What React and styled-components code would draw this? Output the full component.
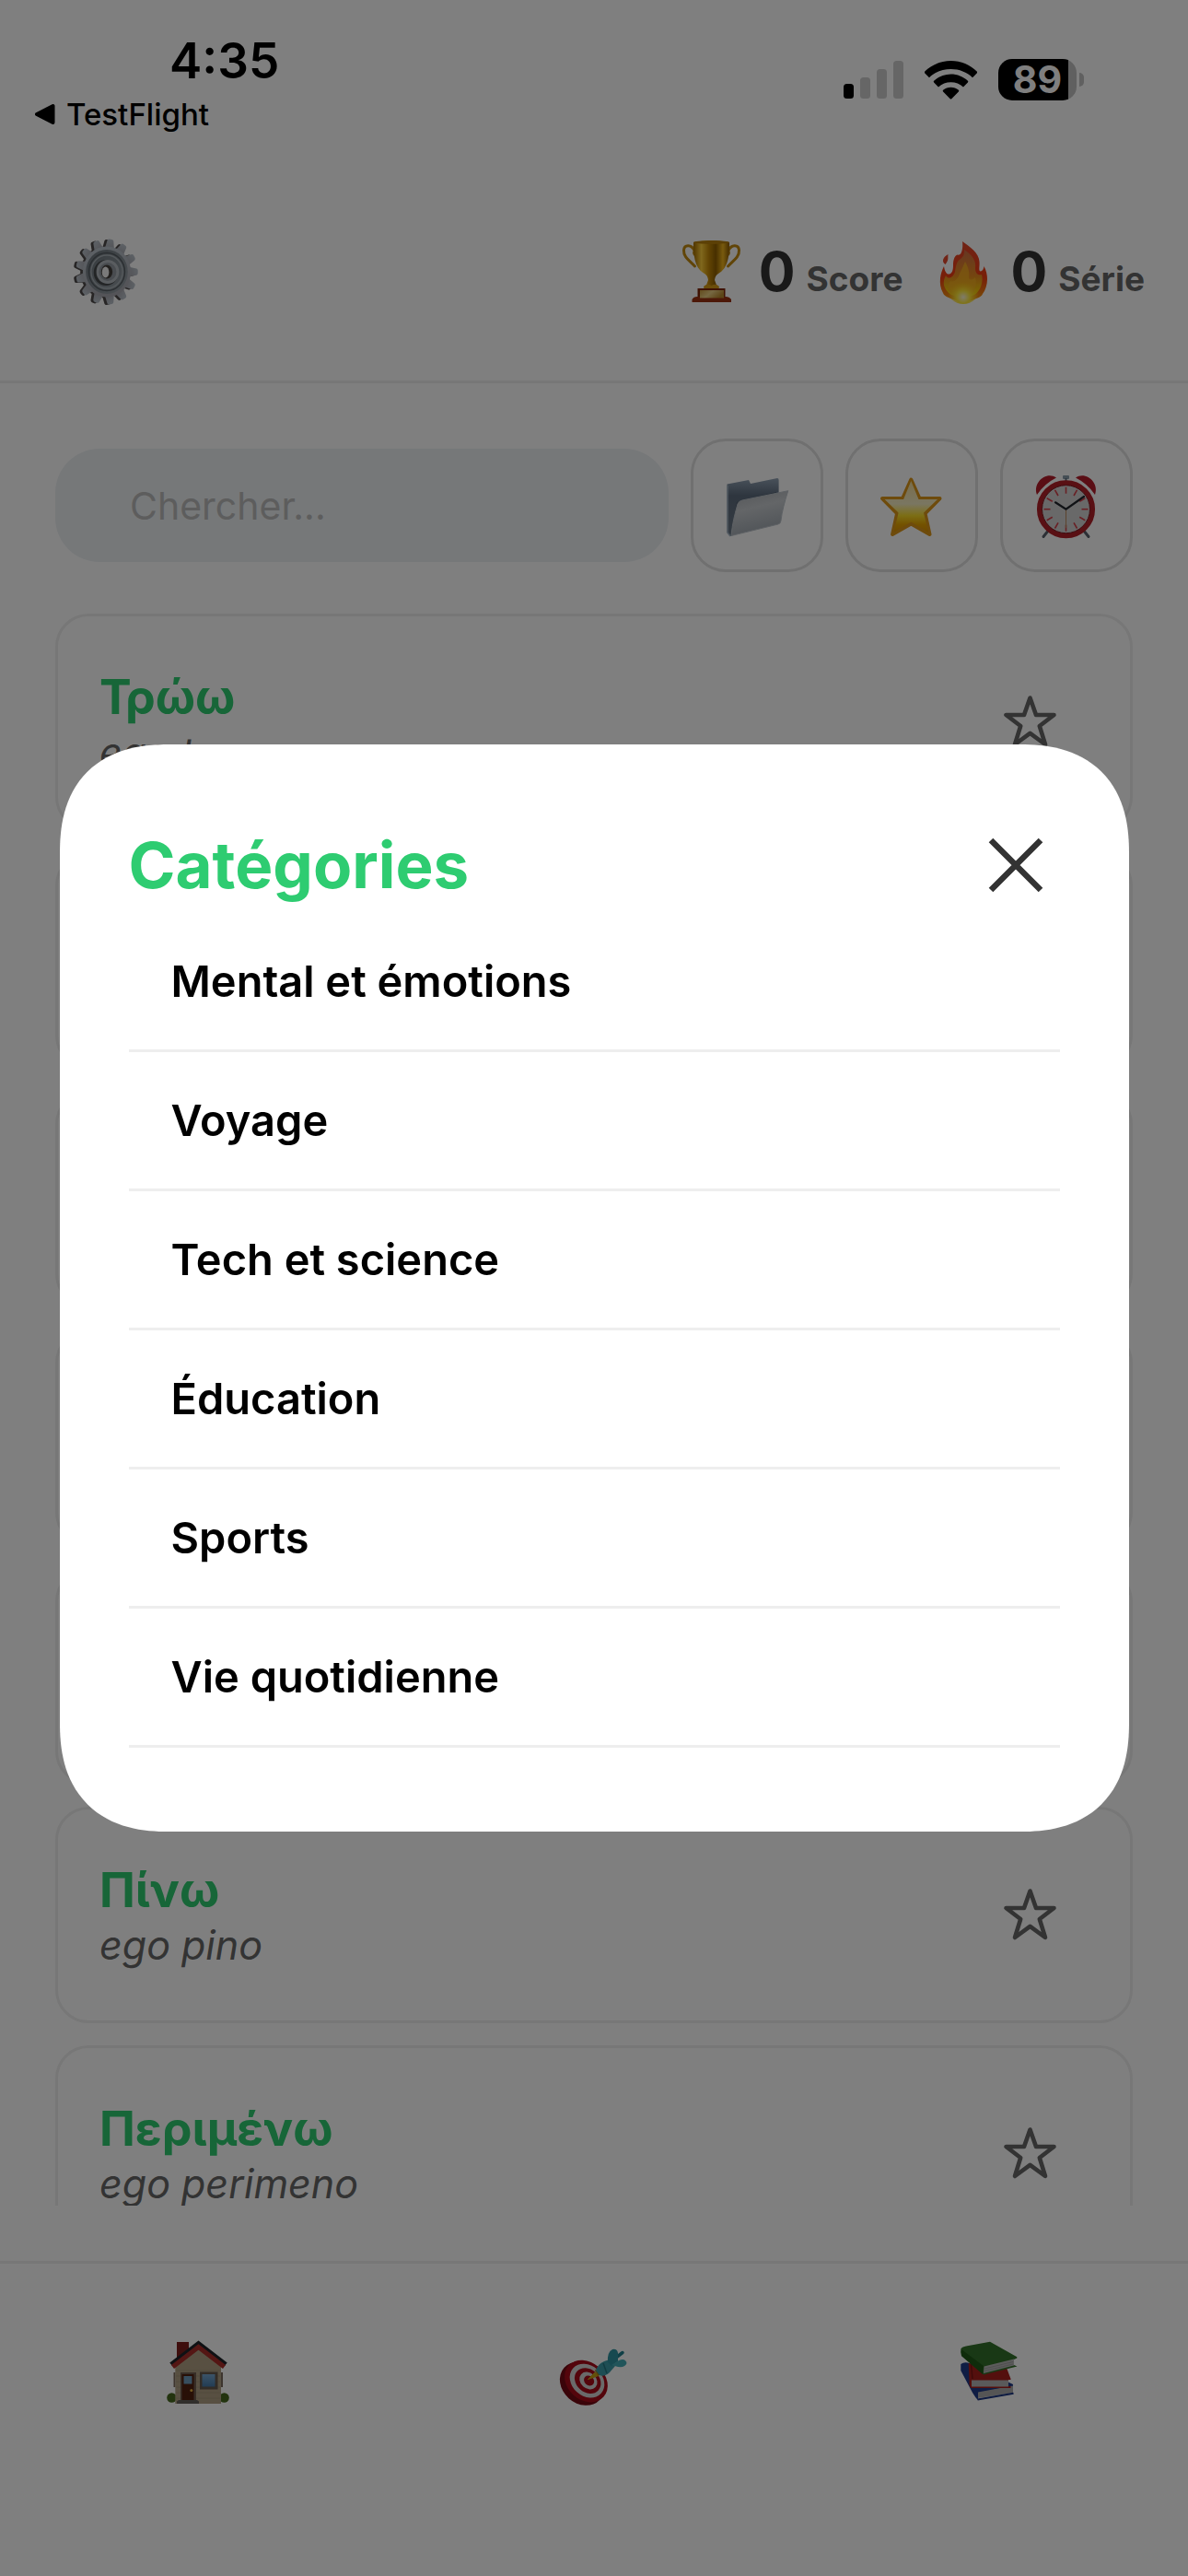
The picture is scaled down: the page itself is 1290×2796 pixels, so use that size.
import React from "react";
import styled, { createGlobalStyle, css } from "styled-components";

const GlobalStyle = createGlobalStyle`
  *, *::before, *::after { box-sizing: border-box; }
  body {
    margin: 0;
    background: #fff;
    color: #000;
    font-family: Inter, "Liberation Sans", sans-serif;
  }
  button, input { font: inherit; color: inherit; }
  h2, p, ul { margin: 0; padding: 0; }
  ul { list-style: none; }
`;

const resetButton = css`
  margin: 0;
  padding: 0;
  border: 0;
  background: none;
  cursor: pointer;
`;

/* ---------- layout ---------- */

const Screen = styled.div`
  display: flex;
  flex-direction: column;
  height: 100vh;
  background: #fff;
`;

const StatusBar = styled.div`
  display: flex;
  justify-content: space-between;
  align-items: flex-start;
  flex: none;
  height: 177px;
  padding: 36px 113px 0 38px;
`;

const StatusLeft = styled.div`
  display: flex;
  flex-direction: column;
  gap: 8px;
`;

const Time = styled.time`
  padding-left: 146px;
  font-size: 53px;
  font-weight: 600;
  line-height: 60px;
`;

const BackLink = styled.a`
  display: flex;
  align-items: center;
  gap: 12px;
  color: #000;
  font-size: 33px;
  font-weight: 500;
  line-height: 40px;
  text-decoration: none;
`;

const StatusRight = styled.div`
  display: flex;
  align-items: center;
  gap: 23px;
  padding-top: 28px;
`;

const Battery = styled.div`
  display: flex;
  align-items: center;
  gap: 3px;
`;

const BatteryBody = styled.div`
  display: flex;
  align-items: center;
  justify-content: center;
  width: 85px;
  height: 45px;
  border-radius: 15px;
  background: linear-gradient(90deg, #000 76px, #c0c0c0 76px);
  color: #fff;
  font-size: 41px;
  font-weight: 700;
  line-height: 45px;
`;

const BatteryTip = styled.div`
  width: 5px;
  height: 15px;
  border-radius: 0 8px 8px 0;
  background: #c0c0c0;
`;

const Header = styled.header`
  display: flex;
  align-items: center;
  justify-content: space-between;
  flex: none;
  height: 239px;
  padding: 0 47px 0 78px;
  border-bottom: 3px solid #eee;
`;

const IconButton = styled.button`
  ${resetButton}
  display: flex;
`;

const Stats = styled.div`
  display: flex;
  gap: 30px;
`;

const Stat = styled.div`
  display: flex;
  align-items: center;
  gap: 15px;
`;

const StatText = styled.div`
  display: flex;
  align-items: baseline;
  gap: 12px;
`;

const StatValue = styled.span`
  color: #333;
  font-size: 59px;
  font-weight: 700;
  line-height: 72px;
`;

const StatLabel = styled.span`
  color: #666;
  font-size: 37px;
  font-weight: 700;
`;

const Toolbar = styled.div`
  display: flex;
  align-items: center;
  gap: 24px;
  flex: none;
  padding: 60px 60px 45px;
`;

const SearchInput = styled.input`
  flex: 1;
  min-width: 0;
  height: 123px;
  padding: 0 81px;
  border: 0;
  border-radius: 48px;
  outline: none;
  background: #ecf0f3;
  font-size: 41px;
  &::placeholder { color: #bbb; opacity: 1; }
`;

const FilterButton = styled.button`
  ${resetButton}
  display: flex;
  align-items: center;
  justify-content: center;
  width: 144px;
  height: 145px;
  border: 3px solid #e0e0e0;
  border-radius: 38px;
`;

const WordList = styled.ul`
  display: flex;
  flex-direction: column;
  gap: 24px;
  flex: 1;
  min-height: 0;
  margin-bottom: 60px;
  padding: 0 60px;
  overflow: hidden;
`;

const Card = styled.li`
  display: flex;
  align-items: center;
  justify-content: space-between;
  flex: none;
  min-height: 235px;
  padding: 0 79px 0 45px;
  border: 3px solid #eee;
  border-radius: 36px;
`;

const Word = styled.p`
  color: #2ecc71;
  font-size: 52px;
  font-weight: 700;
  line-height: 64px;
`;

const Phonetic = styled.p`
  color: #666;
  font-size: 43px;
  font-style: italic;
  line-height: 54px;
`;

const TabBar = styled.nav`
  display: grid;
  grid-template-columns: repeat(3, 1fr);
  flex: none;
  padding-bottom: 103px;
  border-top: 3px solid #eee;
`;

const Tab = styled.button`
  ${resetButton}
  display: flex;
  align-items: center;
  justify-content: center;
  height: 236px;
`;

const Overlay = styled.div`
  position: fixed;
  inset: 0;
  display: flex;
  align-items: center;
  justify-content: center;
  background: rgba(0, 0, 0, 0.5);
`;

const Dialog = styled.section`
  width: 90%;
  padding: 75px 75px 91px;
  border-radius: 105px;
  background: #fff;
  @supports (corner-shape: superellipse(1.25)) {
    border-radius: 118px;
    corner-shape: superellipse(1.25);
  }
`;

const DialogHeader = styled.div`
  display: flex;
  align-items: center;
  justify-content: space-between;
  height: 108px;
  padding: 4px 18px 0 0;
`;

const DialogTitle = styled.h2`
  color: #2ecc71;
  font-size: 69px;
  font-weight: 700;
  line-height: 84px;
`;

const CategoryRow = styled.li`
  border-bottom: 3px solid #eee;
`;

const CategoryButton = styled.button`
  ${resetButton}
  display: block;
  width: 100%;
  padding: 44px 46px;
  color: #000;
  font-size: 47px;
  font-weight: 600;
  line-height: 60px;
  text-align: left;
`;

/* ---------- icons ---------- */

const Emoji = styled.svg.attrs({ viewBox: "0 0 72 72", "aria-hidden": true })`
  display: block;
  flex: none;
  width: 72px;
  height: 72px;
  overflow: visible;
`;

const BackTriangle = () => (
  <svg width="22" height="26" viewBox="0 0 22 26" aria-hidden="true">
    <path d="M2 13 19.500 4V22Z" stroke="#000" strokeWidth="4" strokeLinejoin="round" />
  </svg>
);

const Signal = () => (
  <svg width="65" height="41" viewBox="0 0 65 41" aria-hidden="true">
    <rect x="0" y="25" width="11" height="16" rx="3.500" />
    <g fill="#ccc">
      <rect x="18" y="18" width="11" height="23" rx="3.500" />
      <rect x="36" y="9" width="11" height="32" rx="3.500" />
      <rect x="54" y="0" width="11" height="41" rx="3.500" />
    </g>
  </svg>
);

const Wifi = () => (
  <svg width="57" height="42" viewBox="0 0 57 42" aria-hidden="true">
    <path d="M28.500 0C39.500 0 49.500 4.300 56.700 11.500Q57.500 12.500 56.700 13.400L52 18.200C46 12.300 37.700 9 28.500 9S11 12.300 5 18.200L.3 13.400Q-.5 12.500.3 11.500C7.500 4.300 17.500 0 28.500 0Z" />
    <path d="M28.500 14.500C35.500 14.500 42 17.200 46.900 21.700Q47.700 22.600 46.900 23.500L42 28.400C38.300 25.100 33.600 23.300 28.500 23.300S18.700 25.100 15 28.400L10.100 23.500Q9.300 22.600 10.100 21.700C15 17.200 21.500 14.500 28.500 14.500Z" />
    <path d="M28.500 28.800C31.600 28.800 34.500 29.900 36.900 31.800Q37.800 32.600 36.900 33.500L29.300 41.200Q28.500 42 27.700 41.200L20.100 33.500Q19.200 32.600 20.100 31.800C22.500 29.900 25.400 28.800 28.500 28.800Z" />
  </svg>
);

const TEETH = Array.from({ length: 13 }, (_, i) => (i * 360) / 13 + 7);

const GearShape = ({ fill }) => (
  <g fill={fill}>
    {TEETH.map((angle) => (
      <path key={angle} transform={`rotate(${angle})`} d="M-5.500 -24-3.600 -34Q-3 -35.500 -1.500 -35.500H1.500Q3 -35.500 3.600 -34L5.500 -24Z" />
    ))}
    <circle r="27.500" />
  </g>
);

const Gear = () => (
  <Emoji>
    <defs>
      <linearGradient id="gearFace" x1="0" y1="0" x2="0.3" y2="1">
        <stop offset="0" stopColor="#bcc6cf" />
        <stop offset="1" stopColor="#a8a8b0" />
      </linearGradient>
      <linearGradient id="gearWell" x1="0" y1="0" x2="1" y2="1">
        <stop offset="0" stopColor="#6c757c" />
        <stop offset="1" stopColor="#98a1a8" />
      </linearGradient>
    </defs>
    <g transform="translate(35 36.500) scale(.94 1)"><GearShape fill="#4e4a4a" /></g>
    <g transform="translate(38 36) scale(.95 1)">
      <GearShape fill="url(#gearFace)" />
      <circle r="24" fill="url(#gearWell)" />
      <circle r="20.500" fill="none" stroke="#555c62" strokeWidth="1.500" />
      <circle r="18" fill="none" stroke="#a8b0b6" strokeWidth="1.500" />
      <circle cx="-1" cy="1" r="14" fill="#474a4d" />
      <circle cx="1" cy="0" r="13" fill="#b4bbc1" />
      <circle cx="1" cy="0" r="10" fill="#9299a0" />
      <ellipse cx="0" cy="0" rx="6.500" ry="7.500" fill="#45403d" />
      <ellipse cx="-1.500" cy=".5" rx="4" ry="6" fill="#f4f4f4" />
    </g>
  </Emoji>
);

const Trophy = () => (
  <Emoji>
    <defs>
      <linearGradient id="gold" x1="0" x2="1">
        <stop offset="0" stopColor="#a06a00" />
        <stop offset=".22" stopColor="#ffcf3a" />
        <stop offset=".42" stopColor="#c68b08" />
        <stop offset=".62" stopColor="#8f5f00" />
        <stop offset=".82" stopColor="#f2b61c" />
        <stop offset="1" stopColor="#8a5900" />
      </linearGradient>
      <linearGradient id="plate" x1="0" x2="1" y2=".4">
        <stop offset="0" stopColor="#c79a3c" />
        <stop offset=".5" stopColor="#ecd084" />
        <stop offset="1" stopColor="#b98a2e" />
      </linearGradient>
    </defs>
    <g fill="none" stroke="#c28a10" strokeWidth="3" strokeLinecap="round">
      <path d="M17 13C14 6 6 6 5.500 12.500C5 20 12 24 17.500 30" />
      <path d="M54 13C57 6 65 6 65.500 12.500C66 20 59 24 53.500 30" />
      <path d="M17 13Q15 16 17.500 18M54 13Q56 16 53.500 18" strokeWidth="2" />
    </g>
    <path d="M16 4Q35.500 0 55 4C55 18 54 32 43 38Q39.500 40 39 45L42 53H29L32 45Q31.500 40 28 38C17 32 16 18 16 4Z" fill="url(#gold)" />
    <ellipse cx="35.500" cy="4" rx="19.500" ry="1.900" fill="#b9800c" />
    <path d="M27 52Q31 48 35.500 51Q40 48 44 52L43 56H28Z" fill="#d69a14" />
    <path d="M20.500 54H50.500V65H20.500Z" fill="#7e2407" />
    <path d="M14.500 69V66Q16 63 20 63H51Q55 63 57 66V69Z" fill="#9a3010" />
    <rect x="23" y="56" width="26" height="8.500" fill="url(#plate)" />
  </Emoji>
);

const Flame = () => (
  <Emoji>
    <defs>
      <linearGradient id="flameOuter" x1="0" y1="0" x2="0" y2="1">
        <stop offset="0" stopColor="#e0482c" />
        <stop offset=".6" stopColor="#f03c10" />
        <stop offset="1" stopColor="#f0a010" />
      </linearGradient>
      <linearGradient id="flameMid" x1="0" y1="0" x2="0" y2="1">
        <stop offset="0" stopColor="#cf6e45" />
        <stop offset=".55" stopColor="#e88a20" />
        <stop offset="1" stopColor="#f8e000" />
      </linearGradient>
      <radialGradient id="flameCore" cx=".5" cy=".78" r=".5">
        <stop offset="0" stopColor="#fff8d8" />
        <stop offset=".4" stopColor="#ffe838" />
        <stop offset="1" stopColor="#f8c010" stopOpacity="0" />
      </radialGradient>
    </defs>
    <path d="M34 3C42 9 52 15 52.500 25C53 31 51 35 54 35.500C56 35 57 33 57.500 30C60 35 61 39 61 44C61 50 59 56 56 60Q55 63 49 65Q42 69 35 68Q25 67 19 64Q14 62 13 59C10 54 9.500 48 10 43C10.500 38 12 34 14 30C15 36 17 39 19.500 38.500C23 38 24 34 24 29C24 22 26 18 29 17.500C33 19 35 11 34 3Z" fill="url(#flameOuter)" />
    <path d="M15.500 28C11 25 13 20 18.500 17C18 21 19.500 23 15.500 28Z" fill="#e2482c" />
    <path d="M36 12C45 18 49 24 48 32C48 38 51 40 55 39C57 46 54 57 47 61Q35 66 22 61C13 55 12 47 16 40C19 45 24 42 26 36C27 29 28 24 32 22Q37 18 36 12Z" fill="url(#flameMid)" />
    <path d="M37 25C41 32 42 37 41 43C43 46 46 44 48 42C50 50 48 59 41 63H27C18 60 17 53 21 46C25 48 29 44 31 38Q34 32 37 25Z" fill="#f5b020" opacity=".75" />
    <ellipse cx="35" cy="54" rx="18" ry="17" fill="url(#flameCore)" />
  </Emoji>
);

const Folder = () => (
  <Emoji>
    <defs>
      <linearGradient id="folderBack" x1="0" y1="0" x2="0" y2="1">
        <stop offset="0" stopColor="#92a3b5" />
        <stop offset=".3" stopColor="#5d6c7e" />
        <stop offset="1" stopColor="#6a7785" />
      </linearGradient>
      <linearGradient id="folderFront" x1="0" y1="0" x2=".3" y2="1">
        <stop offset="0" stopColor="#a8acb1" />
        <stop offset=".45" stopColor="#c8ccd0" />
        <stop offset="1" stopColor="#a0a8b0" />
      </linearGradient>
    </defs>
    <path d="M3.500 12.500 27 8 29 12 58 6Q59.600 6 59.600 8V50L7 69 3.500 65Z" fill="url(#folderBack)" />
    <path d="M14 32 57 21V47L8 62Z" fill="#4b5868" opacity=".75" />
    <path d="M4 14V65L7 69" fill="none" stroke="#a5b5c4" strokeWidth="1.500" />
    <path d="M8 68.500C9 56 12 44 15 34Q16 31 20 30L69.800 19.700C66 31 63 43 62 52Q62 55 59 56Z" fill="url(#folderFront)" stroke="#bcc3ca" strokeWidth="1" strokeLinejoin="round" />
  </Emoji>
);

const GoldStar = () => (
  <Emoji>
    <defs>
      <linearGradient id="starFill" x1="0" y1="0" x2="0" y2="1">
        <stop offset="0" stopColor="#f4dc98" />
        <stop offset=".45" stopColor="#f5edc4" />
        <stop offset=".68" stopColor="#f8dc28" />
        <stop offset=".85" stopColor="#e8a400" />
        <stop offset="1" stopColor="#d99000" />
      </linearGradient>
    </defs>
    <path d="M35.300 7.500 44.500 28H66.500L50.500 44.300 55.500 67 35.300 55.500 15.100 67 20.100 44.300 4.100 28H26.100Z" fill="url(#starFill)" stroke="#dc9618" strokeWidth="4" strokeLinejoin="round" />
    <path d="M35.300 9 43.500 29H64L49 43.500 54 64.500 35.300 53.500 16.600 64.500 21.600 43.500 6.600 29H27.100Z" fill="url(#starFill)" />
  </Emoji>
);

const TICKS = Array.from({ length: 12 }, (_, i) => i * 30);

const AlarmClock = () => (
  <Emoji>
    <g stroke="#59616c" strokeWidth="3" strokeLinecap="round">
      <path d="M17 62 11 69.500M54 62 60 69.500" />
    </g>
    <rect x="32" y="3" width="7" height="4" rx="1" fill="#8b9cab" />
    <path d="M35.500 6V11" stroke="#5f7180" strokeWidth="2" />
    <path d="M4 24C-1 11 14 -2 25 5.500Q12 12 4 24ZM67 24C72 11 57 -2 46 5.500Q59 12 67 24Z" fill="#b51d2b" />
    <circle cx="35.500" cy="39.700" r="28.800" fill="#d2d2d2" stroke="#b32028" strokeWidth="5.500" />
    <circle cx="35.500" cy="39.700" r="26" fill="none" stroke="#7c1820" strokeWidth="1" />
    <g transform="translate(35.500 39.700)" stroke="#d3404a" strokeWidth="1.600">
      {TICKS.map((angle) => (
        <path key={angle} transform={`rotate(${angle})`} d="M0 -24V-17" />
      ))}
    </g>
    <path d="M35.500 39.700V60" stroke="#b88a5c" strokeWidth="1" />
    <path d="M24 32.300 35.500 39.700 55 26" fill="none" stroke="#20242a" strokeWidth="2.200" strokeLinecap="round" />
  </Emoji>
);

const House = () => (
  <Emoji>
    <defs>
      <linearGradient id="glass" x1="0" y1="0" x2="0" y2="1">
        <stop offset="0" stopColor="#78a8d0" />
        <stop offset="1" stopColor="#4478a8" />
      </linearGradient>
    </defs>
    <path d="M13 3H26V18L13 27Z" fill="#7c1d1b" />
    <circle cx="7.500" cy="63.500" r="5.300" fill="#46691f" />
    <circle cx="64.500" cy="63.500" r="5.300" fill="#46691f" />
    <path d="M10.500 36V52M62 36V52" stroke="#7a6a5c" strokeWidth="2" />
    <path d="M11.300 29 36.500 8 61 29V70H11.300Z" fill="#b0a185" />
    <path d="M12 34H60M12 40H60M12 46H60M12 52H60M12 58H60M12 64H60" stroke="#a19277" strokeWidth=".8" />
    <path d="M6.500 27 36.500 4 66.500 27" fill="none" stroke="#1f2228" strokeWidth="4" />
    <path d="M8.500 30 36.500 8.500 64.500 30" fill="none" stroke="#a82c28" strokeWidth="5" />
    <rect x="17" y="36" width="17" height="30" fill="#6e5c4e" />
    <rect x="18.500" y="38" width="13" height="28" fill="#50200f" />
    <rect x="20.500" y="40" width="9" height="8.500" fill="#6f9cbd" />
    <circle cx="28.800" cy="55.500" r="1.500" fill="#e0b040" />
    <rect x="38" y="35.500" width="19.500" height="19" fill="#65584c" />
    <rect x="40.500" y="38" width="14" height="13.500" fill="url(#glass)" />
    <path d="M13 70V67.500L15 66H35L37 67.500V70Z" fill="#625e58" />
  </Emoji>
);

const Target = () => (
  <Emoji>
    <g transform="rotate(42 25 46)">
      <ellipse cx="25" cy="49" rx="26" ry="21.500" fill="#750812" />
      <ellipse cx="26.500" cy="44" rx="25.500" ry="20.500" fill="#a80b18" />
      <ellipse cx="27" cy="43" rx="20.500" ry="16.500" fill="#d5d5d5" />
      <ellipse cx="27.500" cy="42.500" rx="15.500" ry="12.500" fill="#a80b18" />
      <ellipse cx="28" cy="42" rx="10.500" ry="8.500" fill="#d5d5d5" />
      <ellipse cx="28.500" cy="41.500" rx="6" ry="5" fill="#a80b18" />
    </g>
    <path d="M29.500 43.500 37 36 41 39.500Z" fill="#c8a014" stroke="#c8a014" strokeLinejoin="round" />
    <path d="M38 33 42 39" stroke="#a08010" strokeWidth="3" />
    <path d="M52 26 67 14.500" stroke="#1f7f8c" strokeWidth="3.500" strokeLinecap="round" />
    <path d="M38 34Q40 27 47 24L53 22 59 29 53 36Q47 41.500 42 39Z" fill="#3c9ca8" />
    <path d="M51 25Q50 14 56 11Q61 10 62 15V24L55 29Z" fill="#2f93a0" />
    <path d="M55 28 63 23Q70 20 71.500 26Q70 31 62 30Z" fill="#43aab5" />
    <path d="M46 26 50 37" stroke="#247682" strokeWidth="1.500" />
  </Emoji>
);

const Books = () => (
  <Emoji>
    <path d="M4.300 27Q8 24 14 26L61 49V51L24 58 22.700 66Q20 63 17 58L4.300 34Z" fill="#1f3a88" />
    <path d="M23 57.500 61 50.500V58L23 64Z" fill="#aaa" />
    <path d="M22.500 65.500 61.500 58.800" stroke="#1c3682" strokeWidth="2" />
    <path d="M12.700 26 54 31 58.500 43V44H56V51H58.500V53H15.500Q13 51 13.500 45Z" fill="#a81e1a" />
    <path d="M16 44.500H56V51.500H16Z" fill="#b5b5b5" />
    <path d="M15.500 27 17 43" stroke="#7c1412" strokeWidth="1.500" />
    <path d="M4.500 10Q6 8 10 7.500L36 2.700 65.300 19.300V20.500L62 22V28L65.500 29.500 29 38.500 5 18Q3.500 14 4.500 10Z" fill="#33702a" />
    <path d="M5 11 29 29 28 38 5 18Z" fill="#1f5817" />
    <path d="M29.500 29.500 62 21.500V28.500L29 37Z" fill="#b8b8b8" />
    <path d="M30 32 61 24.500M30 34.500 61 27" stroke="#989898" strokeWidth=".8" />
  </Emoji>
);

const OutlineStar = () => (
  <svg width="60" height="60" viewBox="0 0 60 60" aria-hidden="true">
    <path d="M30.500 3.500 37 22H56.500L40.800 34 47 54 30.500 41.800 14 54 20.200 34 4.500 22H24Z" fill="none" stroke="#666" strokeWidth="4.600" strokeLinejoin="round" />
  </svg>
);

const Cross = () => (
  <svg width="60" height="60" viewBox="0 0 60 60" aria-hidden="true">
    <path d="M3 3 57 57M57 3 3 57" stroke="#333" strokeWidth="6.500" />
  </svg>
);

/* ---------- data ---------- */

const words = [
  { id: 1, word: "Τρώω", phonetic: "ego troo" },
  { id: 2 },
  { id: 3 },
  { id: 4 },
  { id: 5 },
  { id: 6, word: "Πίνω", phonetic: "ego pino" },
  { id: 7, word: "Περιμένω", phonetic: "ego perimeno" },
];

const categories = [
  "Mental et émotions",
  "Voyage",
  "Tech et science",
  "Éducation",
  "Sports",
  "Vie quotidienne",
];

const StatItem = ({ icon, value, label }) => (
  <Stat>
    {icon}
    <StatText>
      <StatValue>{value}</StatValue>
      <StatLabel>{label}</StatLabel>
    </StatText>
  </Stat>
);

const WordCard = ({ word, phonetic }) => (
  <Card>
    {word && (
      <>
        <div>
          <Word lang="el">{word}</Word>
          <Phonetic>{phonetic}</Phonetic>
        </div>
        <IconButton type="button">
          <OutlineStar />
        </IconButton>
      </>
    )}
  </Card>
);

export default function App() {
  return (
    <>
      <GlobalStyle />
      <Screen>
        <StatusBar>
          <StatusLeft>
            <Time>4:35</Time>
            <BackLink href="#">
              <BackTriangle />
              TestFlight
            </BackLink>
          </StatusLeft>
          <StatusRight>
            <Signal />
            <Wifi />
            <Battery>
              <BatteryBody>89</BatteryBody>
              <BatteryTip />
            </Battery>
          </StatusRight>
        </StatusBar>

        <Header>
          <IconButton type="button">
            <Gear />
          </IconButton>
          <Stats>
            <StatItem icon={<Trophy />} value="0" label="Score" />
            <StatItem icon={<Flame />} value="0" label="Série" />
          </Stats>
        </Header>

        <Toolbar>
          <SearchInput type="text" placeholder="Chercher..." />
          <FilterButton type="button"><Folder /></FilterButton>
          <FilterButton type="button"><GoldStar /></FilterButton>
          <FilterButton type="button"><AlarmClock /></FilterButton>
        </Toolbar>

        <WordList>
          {words.map((item) => (
            <WordCard key={item.id} word={item.word} phonetic={item.phonetic} />
          ))}
        </WordList>

        <TabBar>
          <Tab type="button"><House /></Tab>
          <Tab type="button"><Target /></Tab>
          <Tab type="button"><Books /></Tab>
        </TabBar>
      </Screen>

      <Overlay>
        <Dialog role="dialog" aria-modal="true" aria-labelledby="categories-title">
          <DialogHeader>
            <DialogTitle id="categories-title">Catégories</DialogTitle>
            <IconButton type="button">
              <Cross />
            </IconButton>
          </DialogHeader>
          <ul>
            {categories.map((name) => (
              <CategoryRow key={name}>
                <CategoryButton type="button">{name}</CategoryButton>
              </CategoryRow>
            ))}
          </ul>
        </Dialog>
      </Overlay>
    </>
  );
}
